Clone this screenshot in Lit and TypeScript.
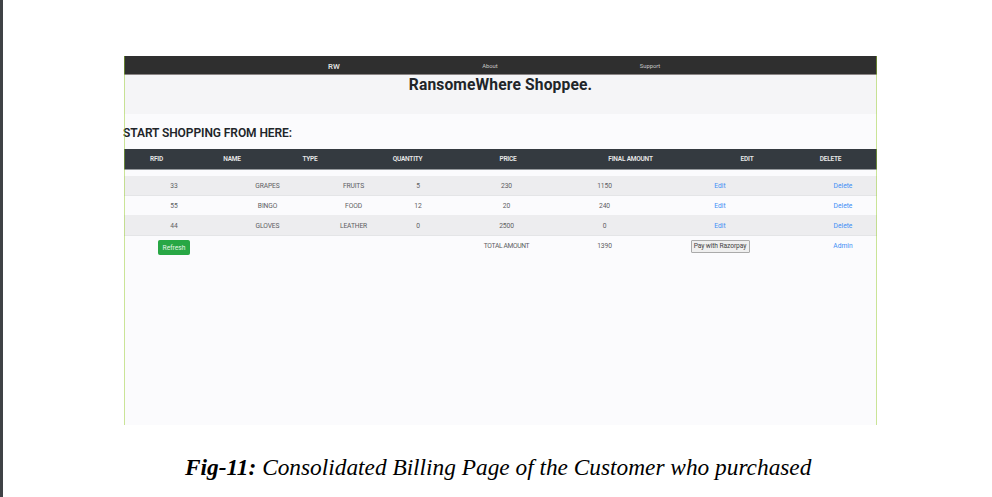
import { LitElement, html, css } from "lit";
import { customElement } from "lit/decorators.js";

const heads = ["RFID", "NAME", "TYPE", "QUANTITY", "PRICE", "FINAL AMOUNT", "EDIT", "DELETE"];
const items = [
  ["33", "GRAPES", "FRUITS", "5", "230", "1150"],
  ["55", "BINGO", "FOOD", "12", "20", "240"],
  ["44", "GLOVES", "LEATHER", "0", "2500", "0"],
];

@customElement("app-root")
export class AppRoot extends LitElement {
  static styles = css`
    :host {
      display: block;
      box-sizing: border-box;
      height: 497px;
      overflow: hidden;
      background: #fff;
      border-left: 3px solid #3f4246;
      padding: 56px 115px 0 121px;
      font-family: Roboto, "Liberation Sans", sans-serif;
      color: #212529;
    }
    .shot {
      position: relative;
      box-sizing: border-box;
      height: 369px;
      background: #fbfbfd;
    }
    .shot::after {
      content: "";
      position: absolute;
      inset: 0;
      border: solid rgba(154, 205, 50, 0.5);
      border-width: 0 1px;
      pointer-events: none;
    }
    .nav {
      display: grid;
      grid-template-columns: 132px 156px 156px 164px 145px;
      box-sizing: border-box;
      height: 19px;
      line-height: 20px;
      background: #2f2f2f;
      border-bottom: 1px solid #8a8585;
      text-align: center;
      font-size: 5.8px;
      color: #c9c9c9;
    }
    .brand { font-size: 7.8px; font-weight: 600; line-height: 21px; color: #dedede; }
    .hero {
      height: 39px;
      background: #f5f5f7;
      text-align: center;
    }
    .title { margin: 0; font-size: 15.6px; line-height: 20px; font-weight: 700; letter-spacing: 0.14px; }
    .lead { margin: 0 0 0 -1px; padding-top: 9px; height: 26px; font-size: 12px; line-height: 20px; font-weight: 600; letter-spacing: -0.08px; white-space: nowrap; }
    .clip { overflow: hidden; }
    .row {
      display: grid;
      margin: 0 0 0 -5px;
      grid-template-columns: 110px 77px 95px 34px 143px 53px 178px 68px;
      justify-items: center;
      white-space: nowrap;
      font-size: 6.7px;
      line-height: 20px;
      letter-spacing: -0.12px;
      color: #5d6063;
      height: 20px;
    }
    .head {
      grid-template-columns: 75px 76px 80px 115px 86px 159px 74px 93px;
      background: #343a40;
      color: #e8e8e8;
      font-size: 6.5px;
      letter-spacing: -0.2px;
      font-weight: 600;
      border-bottom: 1px solid #969a9e;
      margin-bottom: 6px;
    }
    .odd { background: #ededef; }
    .line { box-sizing: border-box; border-bottom: 1px solid #e4e5e7; }
    .short { height: 19px; }
    .tall { height: 21px; line-height: 22px; }
    .last { height: 30px; line-height: 20px; }
    .caps { letter-spacing: -0.35px; }
    .link { color: #3f8ff5; letter-spacing: 0; text-decoration: none; }
    .btn { box-sizing: border-box; font: inherit; padding: 0; text-align: center; }
    .refresh {
      width: 32px; height: 15px; margin-top: 4px; line-height: 14px;
      border: 1px solid #28a745; border-radius: 1.5px; background: #28a745; color: #e3f5e7;
    }
    .pay {
      width: 59px; height: 13px; margin-top: 4px; line-height: 11px; letter-spacing: -0.1px;
      border: 1px solid #aaa; border-radius: 1px; background: #efefef; color: #444;
    }
    .caption {
      margin: 26px 0 0 61px;
      font: italic 23.33px/32px "Liberation Serif", serif;
      color: #000;
      white-space: nowrap;
    }
  `;

  render() {
    return html`
      <main class="shot">
        <nav class="nav">
          <span></span><span class="brand">RW</span><span>About</span><span>Support</span>
        </nav>
        <header class="hero"><h1 class="title">RansomeWhere Shoppee.</h1></header>
        <h2 class="lead">START SHOPPING FROM HERE:</h2>
        <div class="clip">
          <div class="row head">${heads.map((h) => html`<span>${h}</span>`)}</div>
          ${items.map(
            (r, i) => html`<div class="row ${["odd line", "short", "odd line tall"][i]}">
              ${r.map((c) => html`<span>${c}</span>`)}
              <a class="link">Edit</a><a class="link">Delete</a>
            </div>`
          )}
          <div class="row last">
            <button class="btn refresh">Refresh</button>
            <span></span><span></span><span></span>
            <span class="caps">TOTAL AMOUNT</span><span>1390</span>
            <button class="btn pay">Pay with Razorpay</button>
            <a class="link">Admin</a>
          </div>
        </div>
      </main>
      <p class="caption"><b>Fig-11:</b> Consolidated Billing Page of the Customer who purchased</p>
    `;
  }
}
